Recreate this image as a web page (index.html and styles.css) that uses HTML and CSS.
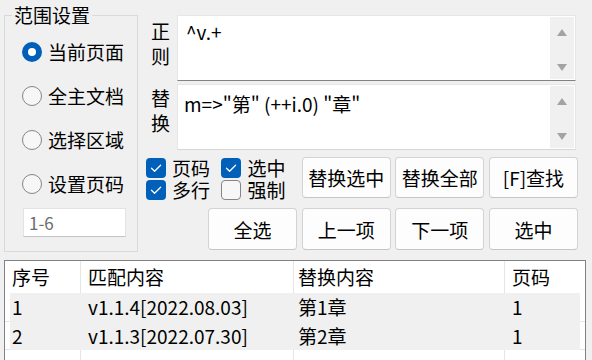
FILE: index.html
```html
<!DOCTYPE html>
<html lang="zh">
<head>
<meta charset="utf-8">
<link rel="stylesheet" href="styles.css">
</head>
<body>
<div class="app">
  <div class="top">
    <fieldset class="range">
      <legend>范围设置</legend>
      <div class="radios">
        <div class="radio-row"><span class="radio on"></span><span>当前页面</span></div>
        <div class="radio-row"><span class="radio"></span><span>全主文档</span></div>
        <div class="radio-row"><span class="radio"></span><span>选择区域</span></div>
        <div class="radio-row"><span class="radio"></span><span>设置页码</span></div>
      </div>
      <div class="pages">1-6</div>
    </fieldset>

    <div class="right">
      <div class="edit-row">
        <div class="label first">正<br>则</div>
        <div class="edit dark">
          <div class="edit-text">^v.+</div>
          <div class="sb"><span class="up"></span><span class="down"></span></div>
        </div>
      </div>
      <div class="edit-row second">
        <div class="label">替<br>换</div>
        <div class="edit light">
          <div class="edit-text alt">m=&gt;"第" (++i.0) "章"</div>
          <div class="sb"><span class="up"></span><span class="down"></span></div>
        </div>
      </div>
      <div class="controls">
        <div class="checks">
          <div class="check-col">
            <div class="check-row"><span class="cb on"><svg viewBox="0 0 20 20"><path d="M5.5 10.2 L8.6 13.2 L14.6 7.2"/></svg></span>页码</div>
            <div class="check-row"><span class="cb on"><svg viewBox="0 0 20 20"><path d="M5.5 10.2 L8.6 13.2 L14.6 7.2"/></svg></span>多行</div>
          </div>
          <div class="check-col">
            <div class="check-row"><span class="cb on"><svg viewBox="0 0 20 20"><path d="M5.5 10.2 L8.6 13.2 L14.6 7.2"/></svg></span>选中</div>
            <div class="check-row"><span class="cb"></span>强制</div>
          </div>
        </div>
        <button class="btn c3">替换选中</button>
        <button class="btn c4">替换全部</button>
        <button class="btn c5">[F]查找</button>
        <button class="btn r2 c2">全选</button>
        <button class="btn r2 c3">上一项</button>
        <button class="btn r2 c4">下一项</button>
        <button class="btn r2 c5">选中</button>
      </div>
    </div>
  </div>

  <div class="table">
    <div class="thead">
      <div class="th">序号</div>
      <div class="th">匹配内容</div>
      <div class="th t3">替换内容</div>
      <div class="th">页码</div>
    </div>
    <div class="trow">
      <div class="cells">
        <div class="td t1">1</div>
        <div class="td">v1.1.4[2022.08.03]</div>
        <div class="td t3">第1章</div>
        <div class="td">1</div>
      </div>
    </div>
    <div class="trow">
      <div class="cells">
        <div class="td t1">2</div>
        <div class="td">v1.1.3[2022.07.30]</div>
        <div class="td t3">第2章</div>
        <div class="td">1</div>
      </div>
    </div>
    <div class="filler">
      <div class="fc"></div><div class="fc"></div><div class="fc"></div><div class="fc last"></div>
    </div>
  </div>
</div>
</body>
</html>
```
FILE: styles.css
```css
* { box-sizing: border-box; }
html, body {
  margin: 0;
  padding: 0;
  background: #f0f0f0;
}
body {
  width: 592px;
  height: 360px;
  overflow: hidden;
  font-family: "Noto Sans CJK SC", "Noto Sans", sans-serif;
  font-size: 19px;
  color: #000;
}
.app { width: 592px; height: 360px; }

.top {
  display: flex;
  height: 260px;
}

/* group box */
.range {
  margin: 5px 0 0 4px;
  padding: 0;
  width: 134px;
  height: 247px;
  border: 1px solid #d9d9d9;
  border-radius: 0;
  min-width: 0;
}
.range legend {
  margin-left: 7px;
  padding: 0 2px;
  font-size: 19px;
  line-height: 20px;
}
.radios {
  padding: 5px 0 0 17px;
}
.radio-row {
  display: flex;
  align-items: center;
  height: 44px;
  line-height: 22px;
}
.radio {
  width: 20px;
  height: 20px;
  border-radius: 50%;
  border: 1px solid #858585;
  background: #f7f7f7;
  margin-right: 6px;
  flex: none;
  display: flex;
  align-items: center;
  justify-content: center;
}
.radio.on {
  border: none;
  background: #005fb8;
}
.radio.on::after {
  content: "";
  width: 8px;
  height: 8px;
  border-radius: 50%;
  background: #fff;
}
.pages {
  margin: 2px 0 0 18px;
  width: 103px;
  height: 29px;
  background: #fff;
  border: 1px solid #e3e3e3;
  border-bottom-color: #c4c4c4;
  color: #6d6d6d;
  font-size: 17px;
  line-height: 27px;
  padding-left: 5px;
}

/* right part */
.right {
  margin-left: 8px;
  width: 432px;
  padding-top: 15px;
}
.edit-row {
  display: flex;
  height: 66px;
}
.edit-row.second { margin-top: 3px; }
.label {
  width: 25px;
  padding-left: 5px;
  line-height: 25px;
  padding-top: 3px;
  flex: none;
}
.edit-row.second .label { padding-top: 1px; }
.edit {
  margin-left: 6px;
  width: 399px;
  height: 66px;
  background: #fff;
  border: 1px solid #e6e6e6;
  display: flex;
}
.edit.dark { border-bottom: 1px solid #838383; }
.edit.light { border-bottom: 1px solid #d6d6d6; }
.edit-text {
  flex: 1;
  padding: 4px 0 0 8px;
  line-height: 24px;
  white-space: nowrap;
}
.edit-text.alt { padding: 7px 0 0 6px; }
.sb {
  width: 24px;
  margin: 1px 1px 1px 0;
  background: #f0f0f0;
  display: flex;
  flex-direction: column;
  align-items: center;
  justify-content: space-between;
  padding: 12px 0 8px;
}
.up, .down {
  width: 0;
  height: 0;
  border-left: 5.5px solid transparent;
  border-right: 5.5px solid transparent;
}
.up { border-bottom: 7px solid #a3a3a3; }
.down { border-top: 7px solid #a3a3a3; }

/* controls grid */
.controls {
  margin-top: 7px;
  display: grid;
  grid-template-columns: 57.33px repeat(4, 89px);
  grid-template-rows: 41px 42px;
  column-gap: 4.67px;
  row-gap: 10px;
}
.checks {
  grid-column: 1 / 3;
  grid-row: 1;
  display: flex;
}
.check-col { width: 78px; }
.check-row {
  display: flex;
  align-items: center;
  height: 22px;
  line-height: 22px;
}
.cb {
  width: 20px;
  height: 20px;
  border-radius: 4px;
  border: 1px solid #858585;
  background: #f7f7f7;
  margin-right: 6px;
  flex: none;
}
.cb.on {
  border: none;
  background: #005fb8;
}
.cb svg { width: 20px; height: 20px; display: block; }
.cb path {
  fill: none;
  stroke: #fff;
  stroke-width: 1.3;
  stroke-linecap: round;
  stroke-linejoin: round;
}
.btn {
  font-family: inherit;
  font-size: 19px;
  color: #000;
  background: #fdfdfd;
  border: 1px solid #d3d3d3;
  border-bottom-color: #c5c5c5;
  border-radius: 4px;
  padding: 0;
  grid-row: 1;
}
.btn.r2 { grid-row: 2; }
.c2 { grid-column: 2; }
.c3 { grid-column: 3; }
.c4 { grid-column: 4; }
.c5 { grid-column: 5; }

/* table */
.table {
  margin-left: 4px;
  width: 582px;
  height: 110px;
  border: 1px solid #828282;
  border-bottom: none;
  background: #fff;
  display: flex;
  flex-direction: column;
}
.thead {
  display: grid;
  grid-template-columns: 76px 213px 211px 1fr;
  height: 32px;
}
.th {
  border-right: 1px solid #e5e5e5;
  padding-left: 7px;
  line-height: 32px;
}
.th:last-child { border-right: none; }
.th.t3 { padding-left: 4px; }
.trow {
  height: 29px;
  border-bottom: 1px solid #e5e5e5;
  padding: 0 5px;
}
.trow + .trow { height: 28px; }
.cells {
  display: grid;
  grid-template-columns: 71px 213px 211px 1fr;
  height: 29px;
  margin-bottom: -1px;
  background: #f0f0f0;
}
.trow + .trow .cells { height: 28px; }
.td {
  padding-left: 7px;
  line-height: 28px;
  white-space: nowrap;
}
.td.t1 { padding-left: 2px; }
.td.t3 { padding-left: 4px; }
.filler {
  flex: 1;
  display: grid;
  grid-template-columns: 76px 213px 211px 1fr;
}
.fc { border-right: 1px solid #e5e5e5; }
.fc.last { border-right: none; }
```
